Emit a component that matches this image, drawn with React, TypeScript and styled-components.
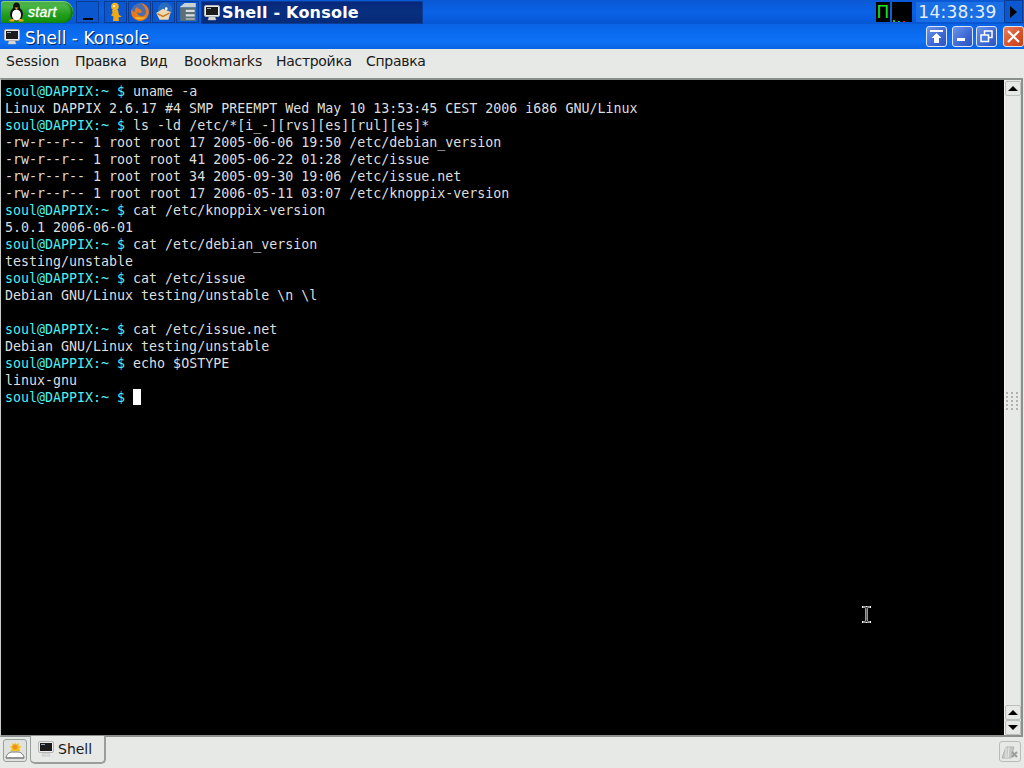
import React from "react";
import styled, { createGlobalStyle } from "styled-components";

const Global = createGlobalStyle`
  html, body { margin: 0; padding: 0; background: #e6e9e6; }
  #root { width: 1024px; height: 768px; overflow: hidden; }
`;

const Desktop = styled.div`
  position: relative;
  width: 1024px;
  height: 768px;
  display: flex;
  flex-direction: column;
  font-family: "DejaVu Sans", sans-serif;
  background: #e6e9e6;
  overflow: hidden;
`;

const Taskbar = styled.div`
  height: 24px;
  flex: none;
  display: flex;
  align-items: flex-start;
  background: linear-gradient(#0a58d4, #0a62e6 50%, #0656d4);
  padding: 1px 0 0 1px;
  box-sizing: border-box;
`;

const StartButton = styled.div`
  width: 72px;
  height: 22px;
  flex: none;
  display: flex;
  align-items: center;
  gap: 3px;
  padding-left: 7px;
  box-sizing: border-box;
  border-radius: 3px 10px 10px 3px;
  background: linear-gradient(#4aae46, #46b442 25%, #209c1a 65%, #128c0e);
  box-shadow: inset 0 1px 1px #86d482, inset -2px 0 2px #0d6e0d;
  color: #fff;
  font-family: "Liberation Sans", sans-serif;
  font-style: italic;
  font-size: 14px;
  letter-spacing: 0.3px;
  -webkit-text-stroke: 0.35px #fff;
`;

const ShowDesktop = styled.div`
  width: 23px;
  height: 22px;
  flex: none;
  margin-left: 3px;
  box-sizing: border-box;
  border: 1px solid #0a3c94;
  background: #0a57cf;
  display: flex;
  align-items: flex-end;
  justify-content: center;
  padding-bottom: 2px;
  &::after {
    content: "";
    width: 10px;
    height: 2px;
    background: #000;
  }
`;

const QuickGroup = styled.div`
  display: flex;
  gap: 1px;
  margin-left: 5px;
`;

const QuickButton = styled.div`
  width: 23px;
  height: 22px;
  box-sizing: border-box;
  border: 1px solid #0a3c94;
  background: #0a57cf;
  display: flex;
  align-items: center;
  justify-content: center;
`;

const TaskButton = styled.div`
  width: 222px;
  height: 23px;
  flex: none;
  margin-left: 2px;
  box-sizing: border-box;
  display: flex;
  align-items: center;
  gap: 2px;
  padding-left: 2px;
  background: linear-gradient(#07287c, #08307f 50%, #062a78);
  border: 1px solid #0a3c94;
  color: #fff;
  font-weight: 700;
  font-size: 16px;
  letter-spacing: 0.2px;
`;

const Tray = styled.div`
  margin-left: auto;
  display: flex;
  align-items: flex-start;
  height: 23px;
  margin-top: -1px;
  margin-right: 1px;
`;

const PagerCell = styled.div`
  width: 14px;
  height: 20px;
  margin-top: 2px;
  background: #000;
  color: #22e022;
  font-size: 17px;
  line-height: 20px;
  text-align: center;
  overflow: hidden;
`;

const Load = styled.div`
  width: 20px;
  height: 20px;
  margin: 2px 0 0 2px;
  background: #000;
  display: flex;
  align-items: flex-end;
  gap: 3px;
  padding-left: 1px;
  box-sizing: border-box;
`;

const LoadTick = styled.i<{ $c: string; $h: number }>`
  width: 2px;
  height: ${(p) => p.$h}px;
  background: ${(p) => p.$c};
`;

const Clock = styled.div`
  width: 88px;
  height: 20px;
  margin: 2px 0 0 4px;
  padding-right: 5px;
  box-sizing: border-box;
  background: #1a6fe4;
  color: #e4eefc;
  font-size: 17px;
  line-height: 20px;
  letter-spacing: 0.25px;
  text-align: center;
`;

const TrayArrow = styled.div`
  width: 19px;
  height: 23px;
  box-sizing: border-box;
  border: 1px solid #0a3c94;
  background: #0a57cf;
  display: flex;
  align-items: center;
  justify-content: center;
  &::after {
    content: "";
    border-left: 7px solid #000;
    border-top: 6px solid transparent;
    border-bottom: 6px solid transparent;
  }
`;

const TitleBar = styled.div`
  height: 25px;
  flex: none;
  display: flex;
  align-items: center;
  padding-left: 4px;
  background: linear-gradient(#0a64e4, #0a6cf0 40%, #0e72f4 70%, #0a62e0);
  color: #fff;
  font-size: 17px;
  text-shadow: 1px 1px 0 #00205c;
`;

const TitleText = styled.span`
  margin-left: 5px;
  position: relative;
  top: 1px;
`;

const TitleButtons = styled.div`
  margin-left: auto;
  display: flex;
  align-items: center;
`;

const WinButton = styled.div<{ $close?: boolean; $gap: number }>`
  width: 21px;
  height: 21px;
  margin-left: ${(p) => p.$gap}px;
  box-sizing: border-box;
  border: 1px solid #dce6f8;
  border-radius: 3px;
  display: flex;
  align-items: center;
  justify-content: center;
  background: ${(p) =>
    p.$close
      ? "linear-gradient(135deg, #e88058, #d8502a 60%, #c44018)"
      : "linear-gradient(135deg, #6c94e8, #3c68d4 60%, #2c54c0)"};
`;

const MenuBar = styled.div`
  height: 29px;
  flex: none;
  display: flex;
  align-items: flex-start;
  padding: 3px 0 0 6px;
  box-sizing: border-box;
  font-size: 14px;
  line-height: 18px;
  color: #1a1a1a;
  background: #e6e9e6;
`;

const MenuItem = styled.span<{ $w: number; $cyr?: boolean }>`
  width: ${(p) => p.$w}px;
  flex: none;
  letter-spacing: ${(p) => (p.$cyr ? "-0.3px" : "0")};
`;

const Frame = styled.div`
  flex: 1;
  min-height: 0;
  display: flex;
  box-sizing: border-box;
  border-top: 2px solid #8c908c;
  border-bottom: 2px solid #8c908c;
  border-left: 1px solid #c8ccc8;
  border-right: 2px solid #8c908c;
  margin-right: 1px;
  padding-left: 1px;
  background: #000;
`;

const Terminal = styled.pre`
  flex: 1;
  margin: 0;
  padding: 3px 0 0 3px;
  background: #000;
  color: #dedede;
  font-family: "DejaVu Sans Mono", monospace;
  font-size: 13.3px;
  line-height: 17px;
  overflow: hidden;
`;

const Prompt = styled.span`
  color: #50eeee;
`;

const Cursor = styled.span`
  display: inline-block;
  width: 8px;
  height: 16px;
  background: #fff;
  vertical-align: -3px;
`;

const Scrollbar = styled.div`
  width: 17px;
  flex: none;
  display: flex;
  flex-direction: column;
  background: #e6e9e6;
  border-left: 1px solid #f2f4f2;
  box-sizing: border-box;
  padding-top: 1px;
`;

const ScrollButton = styled.div<{ $up?: boolean }>`
  height: 15px;
  flex: none;
  box-sizing: border-box;
  background: #e6e9e6;
  border: 1px solid #bcc0bc;
  border-radius: 2px;
  display: flex;
  align-items: center;
  justify-content: center;
  &::after {
    content: "";
    border-left: 5px solid transparent;
    border-right: 5px solid transparent;
    ${(p) => (p.$up ? "border-bottom: 5px solid #000;" : "border-top: 5px solid #000;")}
  }
`;

const ScrollTrack = styled.div`
  flex: 1;
  display: flex;
  align-items: center;
  justify-content: center;
  padding-right: 2px;
  background: #e6e9e6;
  border-right: 1px solid #d4d8d4;
`;

const Grip = styled.div`
  display: grid;
  grid-template-columns: repeat(3, 2px);
  grid-auto-rows: 2px;
  gap: 2px 3px;
`;

const GripDot = styled.i`
  background: #b0b4b0;
`;

const BottomBar = styled.div`
  height: 31px;
  flex: none;
  display: flex;
  align-items: flex-start;
  padding-left: 3px;
  background: #e6e9e6;
`;

const DesktopButton = styled.div`
  width: 24px;
  height: 23px;
  margin-top: 2px;
  box-sizing: border-box;
  border: 1px solid #9ca09c;
  border-radius: 3px;
  display: flex;
  align-items: center;
  justify-content: center;
  background: #dfe2df;
`;

const Tab = styled.div`
  width: 76px;
  height: 28px;
  margin-left: 3px;
  margin-top: -1px;
  box-sizing: border-box;
  display: flex;
  align-items: center;
  gap: 4px;
  padding: 0 0 1px 7px;
  background: #e6e9e6;
  border: 1px solid #9a9e9a;
  border-top: none;
  border-bottom-width: 2px;
  border-right-width: 2px;
  border-radius: 0 0 5px 5px;
  font-size: 14px;
  color: #1a1a1a;
`;

const CloseTab = styled.div`
  width: 22px;
  height: 21px;
  margin-left: auto;
  margin-right: 3px;
  margin-top: 4px;
  box-sizing: border-box;
  border: 1px solid #b8bcb8;
  border-radius: 3px;
  display: flex;
  align-items: center;
  justify-content: center;
`;

const MousePointer = styled.svg`
  position: absolute;
  left: 862px;
  top: 606px;
`;

const Monitor = ({ size = 16 }: { size?: number }) => (
  <svg width={size} height={size} viewBox="0 0 16 16">
    <rect x="0.5" y="0.5" width="15" height="11" rx="1.5" fill="#ececec" stroke="#b4b4b4" />
    <rect x="2" y="2" width="12" height="8" fill="#1c1c1c" />
    <rect x="3" y="3" width="4" height="1" fill="#9ab" />
    <path d="M5 12h6l1 3H4z" fill="#dcdcdc" stroke="#b4b4b4" strokeWidth="0.5" />
  </svg>
);

const Tux = () => (
  <svg width="17" height="20" viewBox="0 0 17 20">
    <ellipse cx="8.5" cy="12" rx="6.5" ry="7" fill="#111" />
    <ellipse cx="8.5" cy="5" rx="3.5" ry="4.500" fill="#111" />
    <ellipse cx="8.5" cy="13" rx="4.500" ry="5.500" fill="#fff" />
    <path d="M6.500 5.500h4L8.500 7.500z" fill="#f0a818" />
    <path d="M1 18L6 16.500 6.500 19.500H2zM16 18L11 16.500 10.500 19.500H15z" fill="#f0a818" />
  </svg>
);

const Kandalf = () => (
  <svg width="14" height="20" viewBox="0 0 14 20">
    <circle cx="6" cy="4.500" r="3.800" fill="#f2b01c" />
    <path d="M3 8h6l1 5 3 1.500-3.500 1 .5 3.500H4l.5-4.500-2.500-1 1.500-2.500z" fill="#eea814" />
    <circle cx="5" cy="4" r="1.200" fill="#fff2b0" />
  </svg>
);

const Firefox = () => (
  <svg width="20" height="20" viewBox="0 0 18 18">
    <circle cx="9" cy="9" r="8" fill="#4a6cb0" />
    <path d="M9 1a8 8 0 1 1-7.600 5.500C2.500 8 3 9 4.500 9 3.600 6.500 5.500 5 7 4c-.5 1.500.5 2 2 2.500 1.500.6 2 2 1 3-1 .8-3 .5-4-.4.500 3 3.500 4.500 6 3.500 2.500-1 3-4.500 1.500-7C12.500 3.500 11 2 9 1z" fill="#e87818" />
    <path d="M4 14c3 2.500 8 2 10.500-1-2 1-5 1.500-7.500.5z" fill="#f4c020" />
  </svg>
);

const Thunderbird = () => (
  <svg width="20" height="20" viewBox="0 0 18 18">
    <circle cx="10" cy="7" r="6.500" fill="#2a6cc0" />
    <path d="M2 10l6-4 7 3-2 7H5z" fill="#f0d8b0" />
    <path d="M3 10.500l5 2.500 6-3" fill="none" stroke="#c87820" strokeWidth="1.200" />
    <circle cx="11" cy="6" r="1.200" fill="#fff" />
  </svg>
);

const Cabinet = () => (
  <svg width="20" height="20" viewBox="0 0 18 18">
    <path d="M2 4l4-3h10v4H2z" fill="#c8d0d4" />
    <rect x="2" y="5" width="14" height="12" fill="#5c7078" />
    <rect x="7" y="7" width="8" height="2" fill="#d8dee0" />
    <rect x="7" y="11" width="8" height="2" fill="#d8dee0" />
    <rect x="7" y="14.500" width="8" height="1.500" fill="#aab4b8" />
  </svg>
);

const Sunrise = () => (
  <svg width="20" height="18" viewBox="0 0 20 18">
    <path d="M10 0l1.300 2.500L14 1l-.5 3 3 .5-2.500 2 1.500 2.500H5.500L7 6.500l-2.500-2 3-.5L7 1l2.700 1.500z" fill="#f4c018" />
    <circle cx="10" cy="5" r="2.500" fill="#f09018" />
    <path d="M1 16c0-3 3-6 6-6h6c3 0 6 3 6 6z" fill="#fff" stroke="#777" />
    <path d="M1 16h18" stroke="#888" strokeWidth="1.500" />
  </svg>
);

const TabClose = () => (
  <svg width="18" height="16" viewBox="0 0 18 16">
    <path d="M1 14L5 3h8l-3 11z" fill="#c4c8c4" stroke="#b0b4b0" />
    <path d="M5 3v11M8 3L7 14" stroke="#e6e9e6" />
    <path d="M11 8l5 5M16 8l-5 5" stroke="#9a9e9a" strokeWidth="2" />
  </svg>
);

type Line = { prompt?: boolean; text: string };

const lines: Line[] = [
  { prompt: true, text: "uname -a" },
  { text: "Linux DAPPIX 2.6.17 #4 SMP PREEMPT Wed May 10 13:53:45 CEST 2006 i686 GNU/Linux" },
  { prompt: true, text: "ls -ld /etc/*[i_-][rvs][es][rul][es]*" },
  { text: "-rw-r--r-- 1 root root 17 2005-06-06 19:50 /etc/debian_version" },
  { text: "-rw-r--r-- 1 root root 41 2005-06-22 01:28 /etc/issue" },
  { text: "-rw-r--r-- 1 root root 34 2005-09-30 19:06 /etc/issue.net" },
  { text: "-rw-r--r-- 1 root root 17 2006-05-11 03:07 /etc/knoppix-version" },
  { prompt: true, text: "cat /etc/knoppix-version" },
  { text: "5.0.1 2006-06-01" },
  { prompt: true, text: "cat /etc/debian_version" },
  { text: "testing/unstable" },
  { prompt: true, text: "cat /etc/issue" },
  { text: "Debian GNU/Linux testing/unstable \\n \\l" },
  { text: "" },
  { prompt: true, text: "cat /etc/issue.net" },
  { text: "Debian GNU/Linux testing/unstable" },
  { prompt: true, text: "echo $OSTYPE" },
  { text: "linux-gnu" },
];

const menus = [
  { label: "Session", w: 69 },
  { label: "Правка", w: 65, cyr: true },
  { label: "Вид", w: 44, cyr: true },
  { label: "Bookmarks", w: 92 },
  { label: "Настройка", w: 90, cyr: true },
  { label: "Справка", w: 62, cyr: true },
];

export default function App() {
  return (
    <Desktop>
      <Global />
      <Taskbar>
        <StartButton>
          <Tux />
          start
        </StartButton>
        <ShowDesktop />
        <QuickGroup>
          <QuickButton><Kandalf /></QuickButton>
          <QuickButton><Firefox /></QuickButton>
          <QuickButton><Thunderbird /></QuickButton>
          <QuickButton><Cabinet /></QuickButton>
        </QuickGroup>
        <TaskButton>
          <Monitor />
          Shell - Konsole
        </TaskButton>
        <Tray>
          <PagerCell>П</PagerCell>
          <Load>
            <LoadTick $c="#22c022" $h={2} />
            <LoadTick $c="#22c022" $h={1} />
            <LoadTick $c="#d02020" $h={1} />
          </Load>
          <Clock>14:38:39</Clock>
          <TrayArrow />
        </Tray>
      </Taskbar>
      <TitleBar>
        <Monitor />
        <TitleText>Shell - Konsole</TitleText>
        <TitleButtons>
          <WinButton $gap={0}>
            <svg width="13" height="13" viewBox="0 0 13 13">
              <path d="M0 0h13v2H0zM6.500 3l5 5H9v5H4V8H1.500z" fill="#fff" />
            </svg>
          </WinButton>
          <WinButton $gap={5}>
            <svg width="13" height="13" viewBox="0 0 13 13">
              <rect x="1" y="8" width="8" height="3" fill="#fff" />
            </svg>
          </WinButton>
          <WinButton $gap={3}>
            <svg width="13" height="13" viewBox="0 0 13 13" fill="none" stroke="#fff" strokeWidth="1.500">
              <rect x="4.500" y="1" width="7.500" height="6.500" />
              <rect x="1" y="5" width="7.500" height="6.500" fill="#4c78dc" />
            </svg>
          </WinButton>
          <WinButton $gap={6} $close>
            <svg width="13" height="13" viewBox="0 0 13 13">
              <path d="M1 1l11 11M12 1L1 12" stroke="#fff" strokeWidth="2.200" />
            </svg>
          </WinButton>
        </TitleButtons>
      </TitleBar>
      <MenuBar>
        {menus.map((m) => (
          <MenuItem key={m.label} $w={m.w} $cyr={m.cyr}>
            {m.label}
          </MenuItem>
        ))}
      </MenuBar>
      <Frame>
        <Terminal>
          {lines.map((l, i) => (
            <div key={i}>
              {l.prompt && <Prompt>soul@DAPPIX:~ $ </Prompt>}
              {l.text || " "}
            </div>
          ))}
          <div>
            <Prompt>soul@DAPPIX:~ $ </Prompt>
            <Cursor />
          </div>
        </Terminal>
        <Scrollbar>
          <ScrollButton $up />
          <ScrollTrack>
            <Grip>
              {Array.from({ length: 15 }).map((_, i) => (
                <GripDot key={i} />
              ))}
            </Grip>
          </ScrollTrack>
          <ScrollButton $up />
          <ScrollButton />
        </Scrollbar>
      </Frame>
      <BottomBar>
        <DesktopButton><Sunrise /></DesktopButton>
        <Tab>
          <Monitor />
          Shell
        </Tab>
        <CloseTab><TabClose /></CloseTab>
      </BottomBar>
      <MousePointer width="9" height="17" viewBox="0 0 9 17">
        <path d="M0 0h9v2H6v13h3v2H0v-2h3V2H0z" fill="#fff" />
        <path d="M1 1h3v1h1V1h3M4 2v13M5 2v13M1 16h3v-1h1v1h3" fill="none" stroke="#000" strokeWidth="0.800" />
      </MousePointer>
    </Desktop>
  );
}
